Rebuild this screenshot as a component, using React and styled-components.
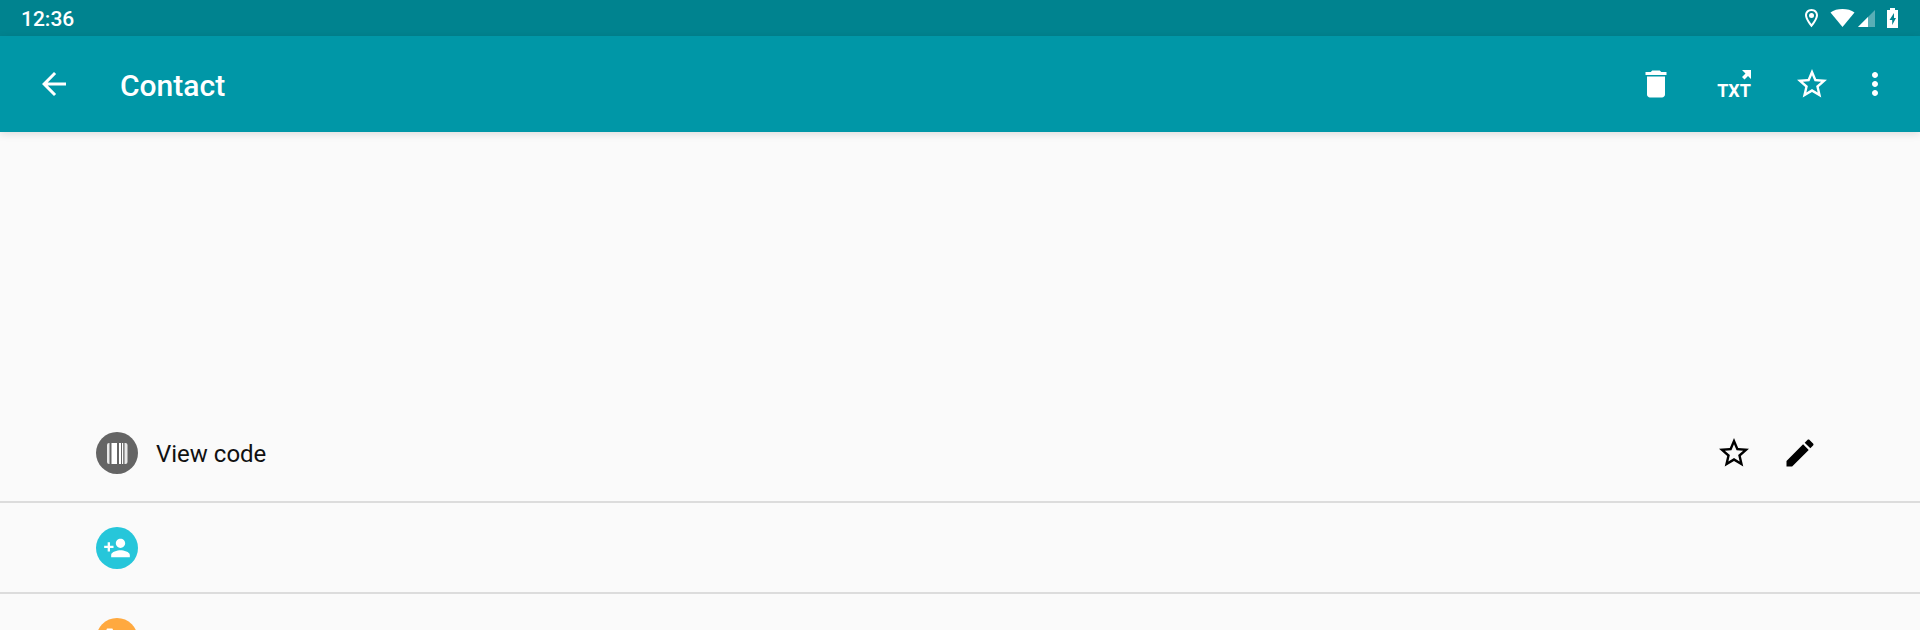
import React from "react";
import styled, { createGlobalStyle } from "styled-components";

const GlobalStyle = createGlobalStyle`
  * {
    box-sizing: border-box;
  }
  body {
    margin: 0;
    background-color: #fafafa;
    font-family: Roboto, sans-serif;
    overflow-x: hidden;
    scrollbar-width: none;
  }
`;

const icons = {
  back: "M20 11H7.83l5.59-5.59L12 4l-8 8 8 8 1.41-1.41L7.83 13H20v-2z",
  trash: "M6 19c0 1.1.9 2 2 2h8c1.1 0 2-.9 2-2V7H6v12zM19 4h-3.5l-1-1h-5l-1 1H5v2h14V4z",
  star: "M22 9.24l-7.19-.62L12 2 9.19 8.63 2 9.24l5.46 4.73L5.82 21 12 17.27 18.18 21l-1.63-7.03L22 9.24zM12 15.4l-3.76 2.27 1-4.28-3.32-2.88 4.38-.38L12 6.1l1.71 4.04 4.38.38-3.32 2.88 1 4.28L12 15.4z",
  more: "M12 8c1.1 0 2-.9 2-2s-.9-2-2-2-2 .9-2 2 .9 2 2 2zm0 2c-1.1 0-2 .9-2 2s.9 2 2 2 2-.9 2-2-.9-2-2-2zm0 6c-1.1 0-2 .9-2 2s.9 2 2 2 2-.9 2-2-.9-2-2-2z",
  edit: "M3 17.25V21h3.75L17.81 9.94l-3.75-3.75L3 17.25zM20.71 7.04c.39-.39.39-1.02 0-1.41l-2.34-2.34c-.39-.39-1.02-.39-1.41 0l-1.83 1.83 3.75 3.75 1.83-1.83z",
  addPerson:
    "M15 12c2.21 0 4-1.79 4-4s-1.79-4-4-4-4 1.79-4 4 1.79 4 4 4zm-9-2V7H4v3H1v2h3v3h2v-3h3v-2H6zm9 4c-2.67 0-8 1.34-8 4v2h16v-2c0-2.66-5.33-4-8-4z",
  call: "M6.62 10.79c1.44 2.83 3.76 5.14 6.59 6.59l2.2-2.2c.27-.27.67-.36 1.02-.24 1.12.37 2.33.57 3.57.57.55 0 1 .45 1 1V20c0 .55-.45 1-1 1-9.39 0-17-7.61-17-17 0-.55.45-1 1-1h3.5c.55 0 1 .45 1 1 0 1.25.2 2.45.57 3.57.11.35.03.74-.25 1.02l-2.2 2.2z",
};

const Icon = ({ name, size = 36 }) => (
  <svg width={size} height={size} viewBox="0 0 24 24" fill="currentColor" aria-hidden="true">
    <path d={icons[name]} />
  </svg>
);

const App = () => {
  return (
    <>
      <GlobalStyle />
      <StatusBar>
        <Clock>12:36</Clock>
        <StatusIcons />
      </StatusBar>
      <Toolbar>
        <IconButton aria-label="Back">
          <Icon name="back" />
        </IconButton>
        <Title>Contact</Title>
        <Actions>
          <IconButton $width={78} aria-label="Delete">
            <Icon name="trash" />
          </IconButton>
          <IconButton $width={78} aria-label="Export as text">
            <TxtIcon />
          </IconButton>
          <IconButton $width={78} aria-label="Favorite">
            <Icon name="star" />
          </IconButton>
          <IconButton $width={48} aria-label="More options">
            <Icon name="more" />
          </IconButton>
        </Actions>
      </Toolbar>
      <main>
        <Details />
        <Row>
          <Badge $color="#646464">
            <BarcodeIcon />
          </Badge>
          <RowLink href="#code">View code</RowLink>
          <RowActions>
            <IconButton $width={66} aria-label="Add code to favorites">
              <Icon name="star" />
            </IconButton>
            <IconButton $width={66} aria-label="Edit name">
              <Icon name="edit" />
            </IconButton>
          </RowActions>
        </Row>
        <Row>
          <Badge $color="#26c6da">
            <Icon name="addPerson" size={28} />
          </Badge>
        </Row>
        <Row>
          <Badge $color="#ffa93f">
            <Icon name="call" size={28} />
          </Badge>
        </Row>
      </main>
    </>
  );
};

const StatusIcons = () => (
  <svg width="96" height="22" viewBox="0 2 96 22" fill="#fff" aria-hidden="true">
    {/* location */}
    <path
      fillRule="evenodd"
      d="M7.5 3C3.7 3 1 5.8 1 9.3c0 4.5 6.5 12 6.5 12s6.5-7.5 6.5-12C14 5.8 11.3 3 7.5 3zm0 2c2.6 0 4.5 1.9 4.5 4.3 0 2.5-2.6 6.3-4.5 8.8C5.6 15.6 3 11.8 3 9.3 3 6.9 4.9 5 7.5 5z"
    />
    <circle cx="7.5" cy="9.5" r="2.5" />
    {/* wifi */}
    <path d="M26.5 6.5c6-4.6 18-4.6 24 0L38.5 21z" />
    {/* signal */}
    <path d="M71 4v17H54z" opacity=".35" />
    <path d="M64 11v10H54z" />
    {/* battery */}
    <path fillRule="evenodd" d="M86 2h5v2h3v18H83V4h3zM90 7l-4.5 7h2.7v5l3.8-7h-2z" />
  </svg>
);

const TxtIcon = () => (
  <svg width="36" height="36" viewBox="0 0 36 36" fill="currentColor" aria-hidden="true">
    <TxtLabel x="18" y="31">
      TXT
    </TxtLabel>
    <path d="M26 4h9v9l-3-3-3.5 3.5-2.5-2.5L29.5 7.5z" />
  </svg>
);

const BarcodeIcon = () => (
  <svg width="22" height="22" viewBox="0 0 22 22" fill="#fff" aria-hidden="true">
    <path d="M3.5 1v21H3a2 2 0 0 1-2-2V3a2 2 0 0 1 2-2z" opacity=".85" />
    <path d="M5.5 1H11v21H5.5zM13 1h2v21h-2zM16 1h1.2v21H16z" />
    <path d="M18.5 1h1a2 2 0 0 1 2 2v17a2 2 0 0 1-2 2h-1z" opacity=".85" />
  </svg>
);

const StatusBar = styled.div`
  display: flex;
  align-items: center;
  justify-content: space-between;
  height: 36px;
  padding: 2px 20px 0 21px;
  background-color: #00838f;
`;

const Clock = styled.time`
  color: white;
  font-size: 21px;
  line-height: 36px;
  font-weight: 500;
`;

const Toolbar = styled.header`
  display: flex;
  align-items: center;
  height: 96px;
  padding: 0 21px 0 30px;
  background-color: #0097a7;
  color: white;
  box-shadow: 0 2px 8px rgba(0, 0, 0, 0.12);
`;

const Title = styled.h1`
  margin: 0 0 0 42px;
  padding-top: 3px;
  font-size: 30px;
  line-height: 36px;
  font-weight: 500;
`;

const Actions = styled.div`
  display: flex;
  margin-left: auto;
`;

const IconButton = styled.button`
  display: flex;
  align-items: center;
  justify-content: center;
  width: ${({ $width = 48 }) => $width}px;
  height: 48px;
  padding: 0;
  border: none;
  background: none;
  color: inherit;
  cursor: pointer;
`;

const TxtLabel = styled.text`
  font-family: Roboto, sans-serif;
  font-size: 18px;
  font-weight: 700;
  text-anchor: middle;
`;

const Details = styled.section`
  height: 273px;
`;

const Row = styled.div`
  display: flex;
  align-items: center;
  min-height: 91px;
  padding: 0 87px 0 96px;
  border-bottom: 2px solid #dcdcdc;
  color: black;

  &:first-of-type {
    min-height: 98px;
  }
`;

const Badge = styled.span`
  display: flex;
  align-items: center;
  justify-content: center;
  width: 42px;
  height: 42px;
  border-radius: 50%;
  background-color: ${({ $color }) => $color};
  color: white;
`;

const RowLink = styled.a`
  margin-left: 18px;
  padding-top: 2px;
  color: #111;
  font-size: 24px;
  line-height: 36px;
  text-decoration: none;
`;

const RowActions = styled.div`
  display: flex;
  margin-left: auto;
`;

export default App;
